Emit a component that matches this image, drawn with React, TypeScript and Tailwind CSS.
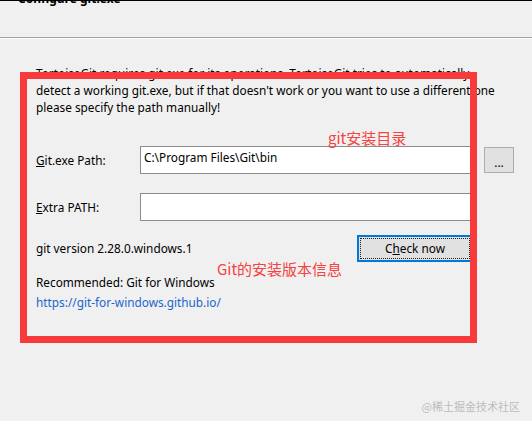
export default function App() {
    return (
        <div className="relative h-[421px] w-[532px] overflow-hidden border-t border-black bg-[#f0f0f0] font-['Noto_Sans','Noto_Sans_CJK_SC',sans-serif] text-[11.8px] text-black">
            {/* Header - title scrolled mostly out of view */}
            <div className="flex h-[36px] flex-col overflow-hidden pl-[18px]">
                <p className="mt-[-10px] text-[12px] font-bold leading-[16px]">Configure git.exe</p>
            </div>
            <div className="h-px bg-[#a0a0a0]" />
            <div className="h-px bg-white" />

            <div className="flex flex-col pl-[36px] pr-[18px]">
                {/* Intro */}
                <p className="mt-[26px] whitespace-nowrap leading-[17px]">
                    TortoiseGit requires git.exe for its operations. TortoiseGit tries to automatically
                    <br />
                    detect a working git.exe, but if that doesn't work or you want to use a different one
                    <br />
                    please specify the path manually!
                </p>

                {/* Git.exe Path */}
                <div className="mt-[30px] flex items-center">
                    <label className="w-[104px] leading-[17px]">
                        <u>G</u>it.exe Path:
                    </label>
                    <div className="h-[28px] flex-1 border border-[#8c8c8c] bg-white pl-[3px] pt-[2px] leading-[17px]">
                        C:\Program Files\Git\bin
                    </div>
                    <button className="ml-[11px] flex h-[26px] w-[30px] items-end justify-center border border-[#adadad] bg-[#e1e1e1] pb-[4px] leading-[12px]">
                        ...
                    </button>
                </div>

                {/* Extra PATH */}
                <div className="mt-[19px] flex items-center">
                    <label className="w-[104px] leading-[17px]">
                        <u>E</u>xtra PATH:
                    </label>
                    <div className="h-[28px] flex-1 border border-[#8c8c8c] bg-white" />
                    <div className="ml-[11px] w-[30px]" />
                </div>

                {/* Version + check */}
                <div className="mt-[14px] flex items-center">
                    <span className="flex-1 leading-[17px]">git version 2.28.0.windows.1</span>
                    <button className="h-[27px] w-[116px] border-2 border-[#0078d7] bg-[#e1e1e1] p-px">
                        <div className="flex h-full items-center justify-center border border-dotted border-[#202020] leading-[17px]">
                            C<u>h</u>eck now
                        </div>
                    </button>
                    <div className="ml-[11px] w-[30px]" />
                </div>

                <p className="mt-[12px] leading-[17px]">Recommended: Git for Windows</p>
                <p className="mt-[3px] leading-[17px] text-[#1a66cc]">https://git-for-windows.github.io/</p>
            </div>

            {/* Annotation overlay */}
            <div className="absolute left-[20px] top-[71px] h-[271px] w-[457px] border-[7px] border-[#f83a3a]" />
            <span className="absolute left-[328px] top-[127px] font-['Noto_Sans_CJK_SC',sans-serif] text-[15px] leading-[20px] text-[#f54242]">
                git安装目录
            </span>
            <span className="absolute left-[217px] top-[258px] font-['Noto_Sans_CJK_SC',sans-serif] text-[15px] leading-[20px] text-[#f54242]">
                Git的安装版本信息
            </span>

            {/* Watermark */}
            <span className="absolute right-[12px] top-[396px] font-['Noto_Sans_CJK_SC',sans-serif] text-[11px] leading-[18px] text-[#bdbdbd]">
                @稀土掘金技术社区
            </span>
        </div>
    );
}
